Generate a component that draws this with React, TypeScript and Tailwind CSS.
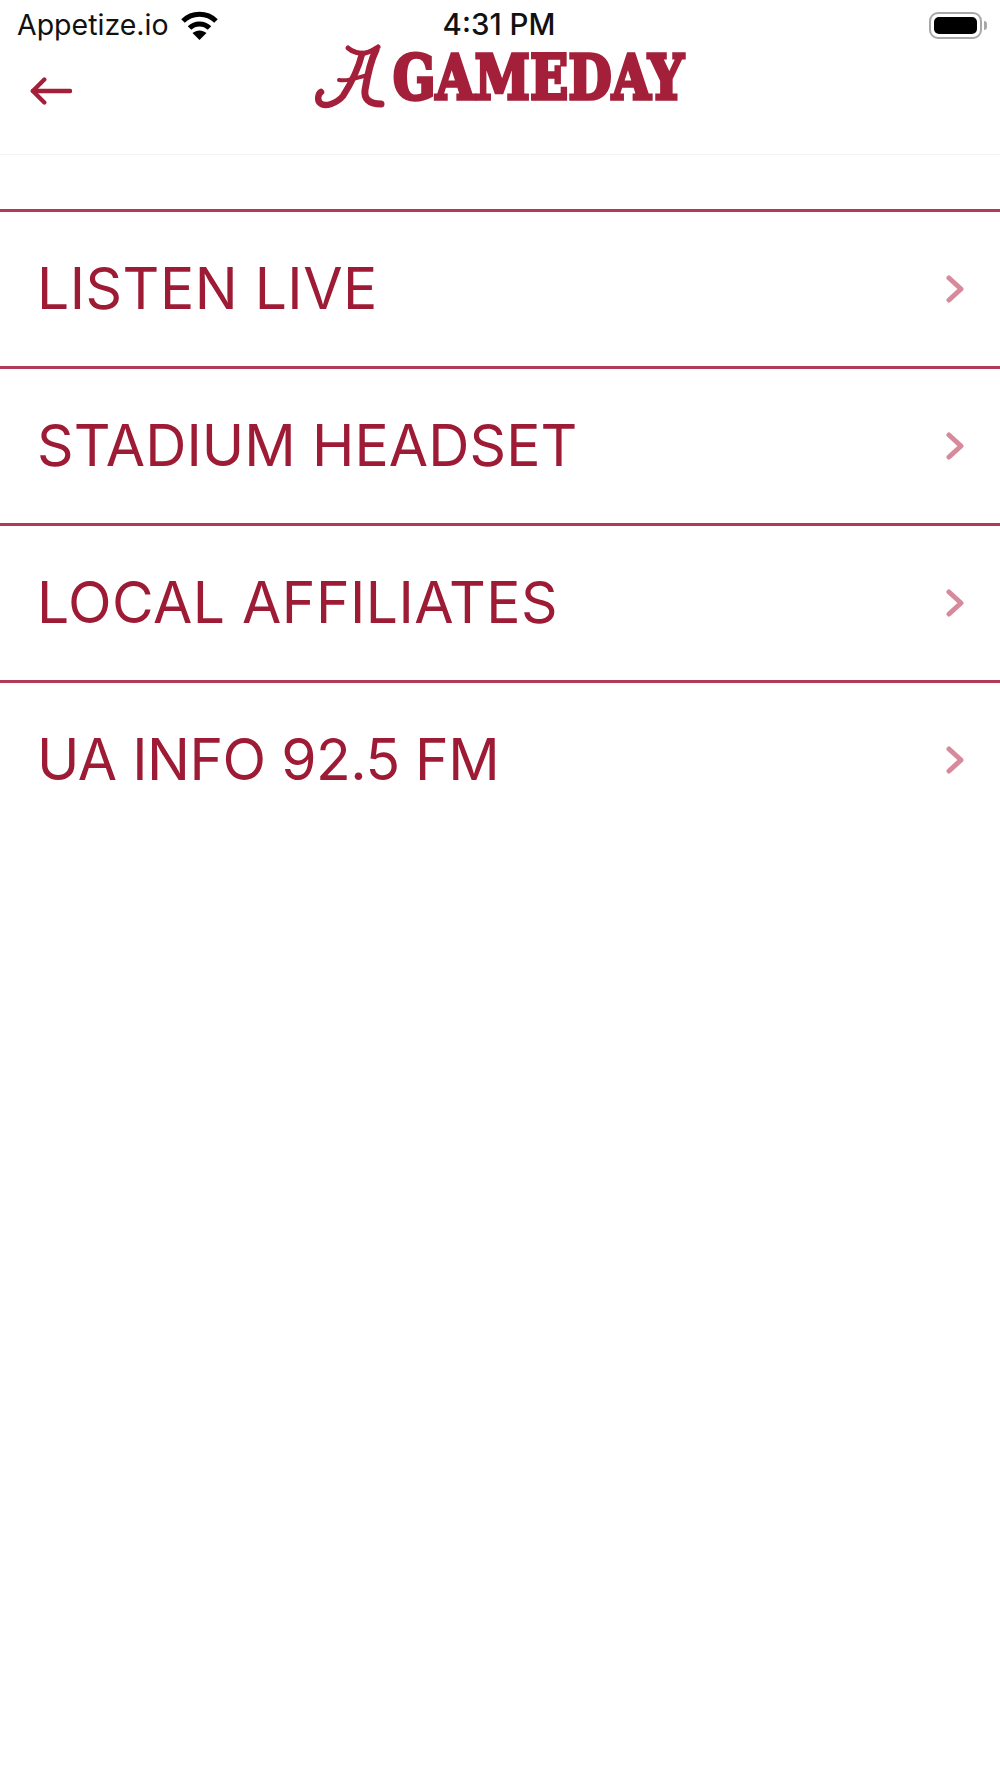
const crimson = "#a4203a";

const rows = [
  { label: "LISTEN LIVE", tracking: "tracking-[0.5px]" },
  { label: "STADIUM HEADSET", tracking: "tracking-[0.1px]" },
  { label: "LOCAL AFFILIATES", tracking: "tracking-[0.45px]" },
  { label: "UA INFO 92.5 FM", tracking: "tracking-[-0.5px]" },
];

function Wifi() {
  return (
    <svg width="37" height="29" viewBox="0 0 37 29" fill="none" stroke="#000" strokeWidth="5">
      <path d="M2 10C11 1 26 1 35 10" />
      <path d="M8.5 17C14 11.5 23 11.5 28.5 17" />
      <path d="M18.5 29L11.5 22C16 18.5 21 18.5 25.5 22Z" fill="#000" stroke="none" />
    </svg>
  );
}

function Battery() {
  return (
    <div className="flex items-center">
      <div className="flex h-[27px] w-[53px] rounded-[9px] border-2 border-[#a8a8a8] p-[3px]">
        <div className="flex-1 rounded-[5px] bg-black" />
      </div>
      <div className="ml-[2px] h-[9px] w-[3px] rounded-r-sm bg-[#a8a8a8]" />
    </div>
  );
}

function ScriptA() {
  return (
    <svg className="shrink-0" width="80" height="72" viewBox="0 0 80 72" fill="none" stroke={crimson} strokeLinecap="round" strokeLinejoin="round">
      <path d="M38 8C42 12 50 14 55 13C60 12 65 9 68 7" strokeWidth="5" />
      <path d="M52 14C48 30 40 45 33 56C27 63 15 68 10 63C7 60 8 54 11 52" strokeWidth="6.5" />
      <path d="M66 10C60 22 57 38 55 50C54 58 58 64 71 64" strokeWidth="7" />
      <path d="M29 40C40 42 48 37 58 35" strokeWidth="4" />
    </svg>
  );
}

export default function App() {
  return (
    <div className="flex min-h-[1778px] flex-col bg-white font-['Inter',sans-serif]">
      {/* status bar */}
      <div className="grid h-[44px] grid-cols-[1fr_auto_1fr] items-center pl-[17px] pr-[13px] pt-[6px]">
        <div className="flex items-center gap-[12px]">
          <span className="text-[28.5px] leading-none text-[#111]">Appetize.io</span>
          <Wifi />
        </div>
        <span className="pr-[6px] text-center text-[29.5px] font-medium leading-none text-[#111]">4:31 PM</span>
        <div className="flex justify-end">
          <Battery />
        </div>
      </div>

      {/* header */}
      <div className="grid h-[111px] grid-cols-[1fr_auto_1fr] items-start border-b border-[#f3f3f3]">
        <svg className="ml-[30px] mt-[32px]" width="42" height="30" viewBox="0 0 44 30" fill="none" stroke={crimson} strokeWidth="4.5" strokeLinecap="round" strokeLinejoin="round">
          <path d="M42 15H3" />
          <path d="M15 3L3 15L15 27" />
        </svg>
        <div className="-mt-[4px] flex w-[380px] items-center">
          <ScriptA />
          <span className="ml-[3px] mt-[4px] origin-left scale-x-[0.89] whitespace-nowrap font-['DejaVu_Serif_Condensed','DejaVu_Serif',serif] text-[62px] font-bold leading-none tracking-[0.5px] text-[#a4203a] [-webkit-text-stroke:3.5px_#a4203a]">
            GAMEDAY
          </span>
        </div>
        <div />
      </div>

      {/* list */}
      <div className="mt-[54px] flex flex-col">
        {rows.map((row) => (
          <div key={row.label} className="flex h-[157px] items-center justify-between border-t-[3px] border-[#b23a56] pl-[37px] pr-[36px]">
            <span className={`-mt-[2px] text-[57px] leading-none text-[#9e1b36] ${row.tracking}`}>{row.label}</span>
            <svg width="18" height="28" viewBox="0 0 18 28" fill="none" stroke="#d68a9c" strokeWidth="5" strokeLinecap="round" strokeLinejoin="round">
              <path d="M3 3L15 14L3 25" />
            </svg>
          </div>
        ))}
      </div>
    </div>
  );
}
